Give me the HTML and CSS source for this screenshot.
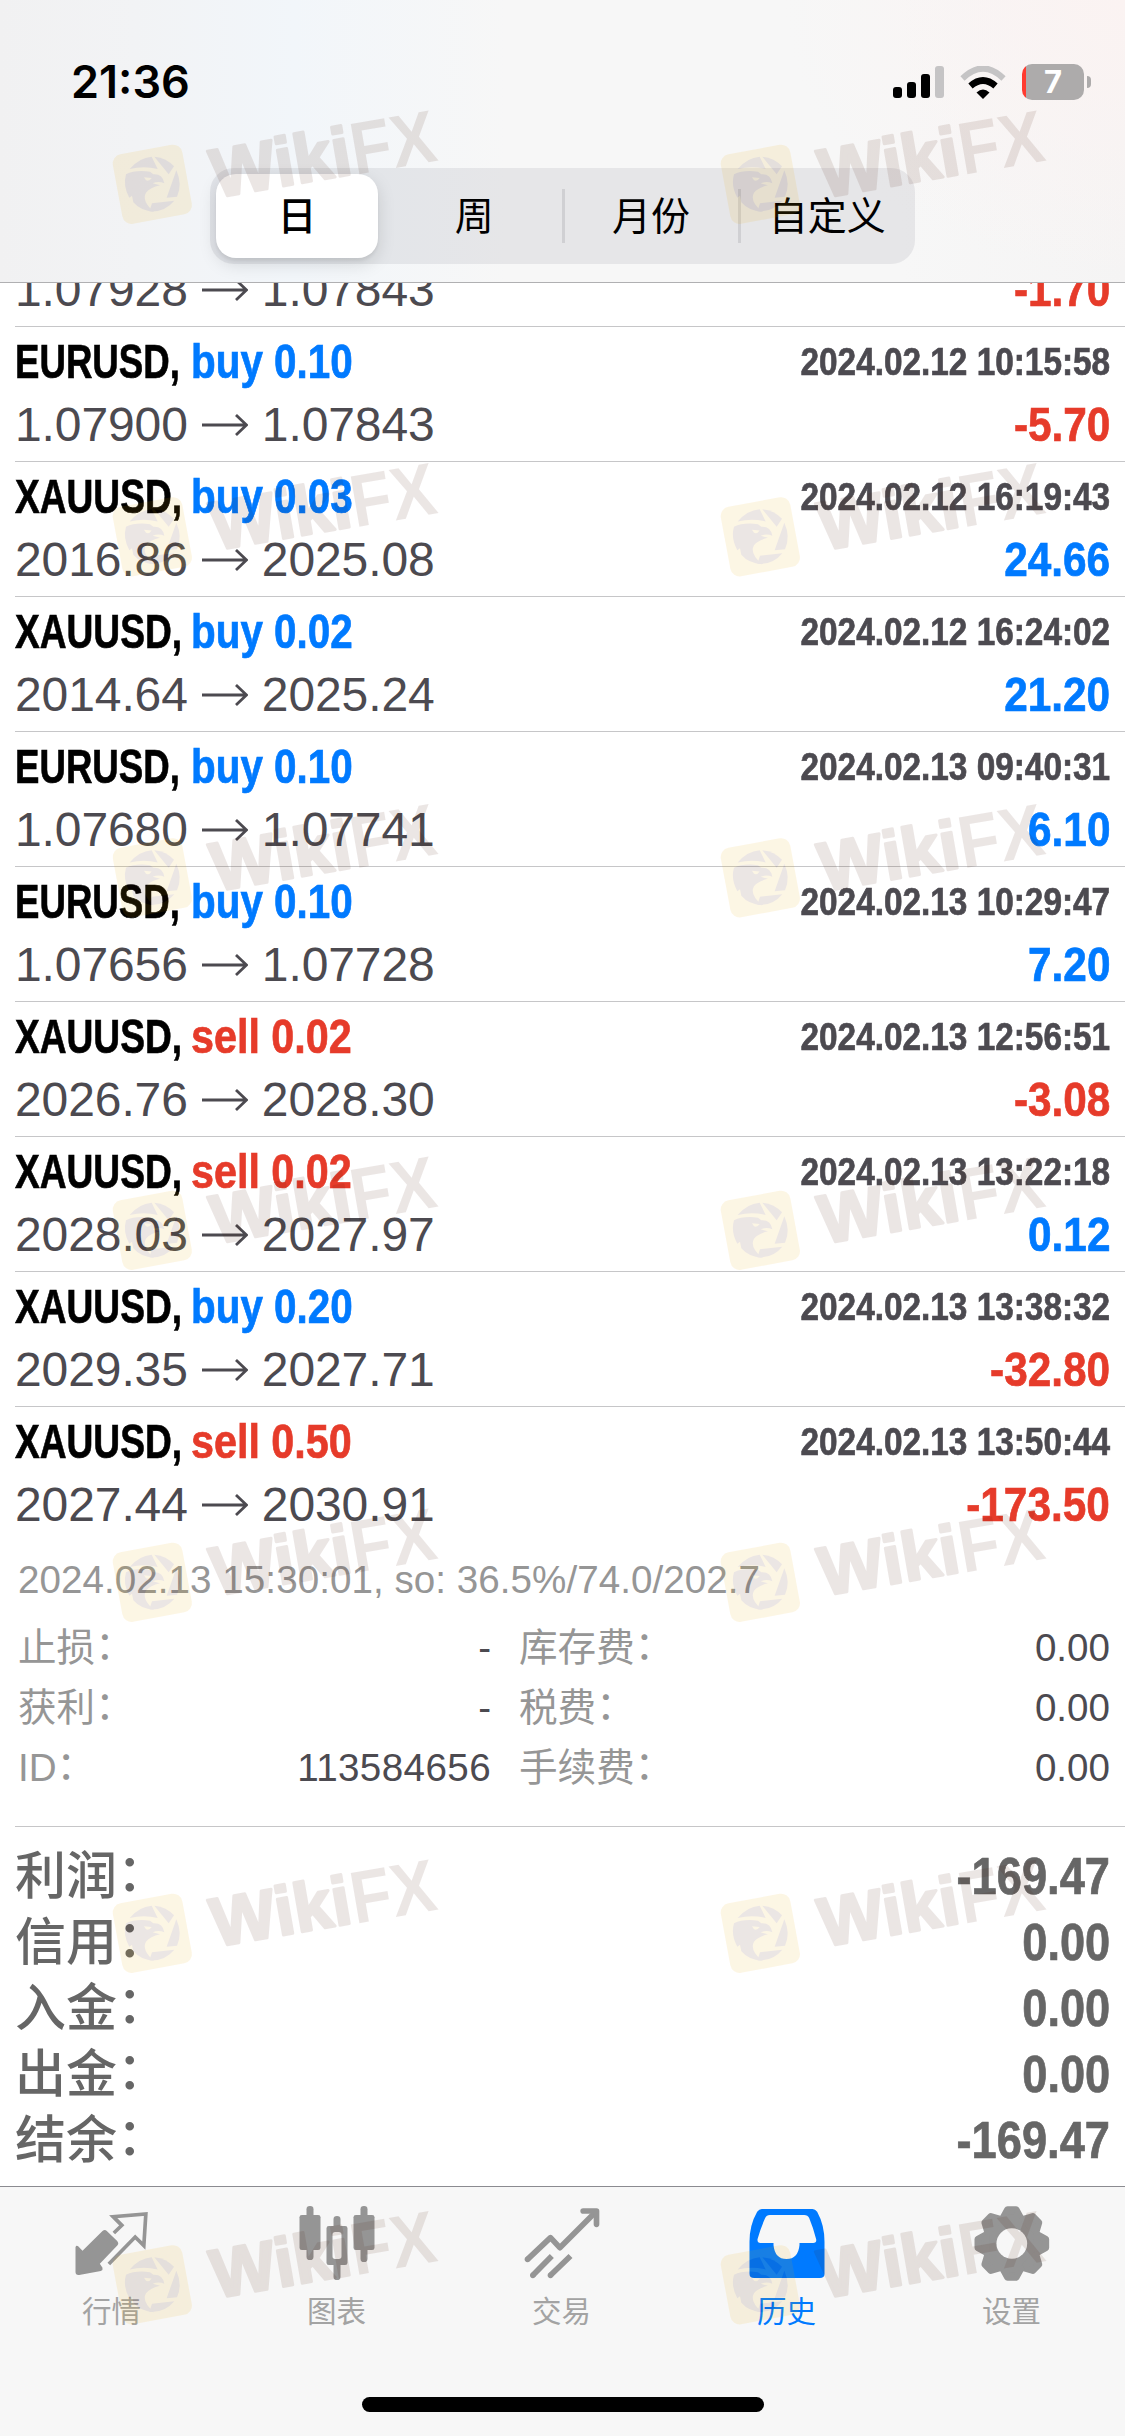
FILE: index.html
```html
<!DOCTYPE html>
<html lang="zh-CN">
<head>
<meta charset="utf-8">
<title>历史</title>
<link rel="stylesheet" href="styles.css">
</head>
<body>
<svg class="defs" width="0" height="0" aria-hidden="true">
  <symbol id="arrow" viewBox="0 0 46 24"><path d="M0 12H44M34 2L44.500 12L34 22" fill="none" stroke="#4c4a50" stroke-width="2.800"/></symbol>
  <symbol id="mark" viewBox="0 0 1050 390" overflow="visible">
    <rect x="51" y="144" width="212" height="212" rx="28" fill="#ebaa00" transform="rotate(-10.500 157 250)"/>
    <g fill="#461400">
      <path d="M89 204Q117 170 155 167L173 204Q132 194 89 204Z"/>
      <path d="M163 167Q200 171 222 196L206 220Z"/>
      <path d="M229 208Q248 250 231 287L200 290Z"/>
      <path d="M156 307L223 299Q194 334 148 331Z"/>
      <path d="M78 220Q106 206 150 212L160 220Q188 218 193 247Q176 239 158 247L180 253Q150 260 138 275Q124 300 162 332Q122 330 100 304L96 284L88 290Q68 255 78 220Z"/>
    </g>
    <path d="M132 229L155 231Q148 242 138 238Z" fill="#ebaa00"/>
    <g class="mark-text">
      <text class="mark-round" transform="translate(346 290) rotate(-9.800)" textLength="422" lengthAdjust="spacingAndGlyphs">Wiki</text>
      <text transform="translate(765 222) rotate(-9.800)" textLength="256" lengthAdjust="spacingAndGlyphs">FX</text>
    </g>
  </symbol>
</svg>

<header class="header">
  <div class="status">
    <span class="time">21:36</span>
    <div class="status-icons">
      <svg width="51" height="32" viewBox="0 0 51 32"><rect y="21" width="9" height="11" rx="3"/><rect x="14" y="16" width="9" height="16" rx="3"/><rect x="28" y="8" width="9" height="24" rx="3"/><rect x="42" width="9" height="32" rx="3" fill="#c5c4c5"/></svg>
      <svg width="46" height="33" viewBox="0 0 46 33"><path d="M2.500 12.500Q23-7.500 43.500 12.500" fill="none" stroke="#c5c4c5" stroke-width="6"/><path d="M10.500 20Q23 9 35.500 20" fill="none" stroke="#000" stroke-width="6.500"/><path d="M16.500 26.500Q23 20.500 29.500 26.500L23 33Z"/></svg>
      <div class="battery"><span>7</span></div>
    </div>
  </div>
  <nav class="segments">
    <span class="segment active">日</span><span class="segment">周</span><span class="segment ruled">月份</span><span class="segment ruled">自定义</span>
  </nav>
</header>

<main class="list">
  <div class="trade partial">
    <div class="line price"><span>1.07928</span><svg class="arrow"><use href="#arrow"/></svg><span>1.07843</span><b class="amount loss">-1.70</b></div>
  </div>
  <div class="trade">
    <div class="line title"><b class="symbol eur">EURUSD,</b><b class="side buy">buy 0.10</b><b class="date">2024.02.12 10:15:58</b></div>
    <div class="line price"><span>1.07900</span><svg class="arrow"><use href="#arrow"/></svg><span>1.07843</span><b class="amount loss">-5.70</b></div>
  </div>
  <div class="trade">
    <div class="line title"><b class="symbol">XAUUSD,</b><b class="side buy">buy 0.03</b><b class="date">2024.02.12 16:19:43</b></div>
    <div class="line price"><span>2016.86</span><svg class="arrow"><use href="#arrow"/></svg><span>2025.08</span><b class="amount gain">24.66</b></div>
  </div>
  <div class="trade">
    <div class="line title"><b class="symbol">XAUUSD,</b><b class="side buy">buy 0.02</b><b class="date">2024.02.12 16:24:02</b></div>
    <div class="line price"><span>2014.64</span><svg class="arrow"><use href="#arrow"/></svg><span>2025.24</span><b class="amount gain">21.20</b></div>
  </div>
  <div class="trade">
    <div class="line title"><b class="symbol eur">EURUSD,</b><b class="side buy">buy 0.10</b><b class="date">2024.02.13 09:40:31</b></div>
    <div class="line price"><span>1.07680</span><svg class="arrow"><use href="#arrow"/></svg><span>1.07741</span><b class="amount gain">6.10</b></div>
  </div>
  <div class="trade">
    <div class="line title"><b class="symbol eur">EURUSD,</b><b class="side buy">buy 0.10</b><b class="date">2024.02.13 10:29:47</b></div>
    <div class="line price"><span>1.07656</span><svg class="arrow"><use href="#arrow"/></svg><span>1.07728</span><b class="amount gain">7.20</b></div>
  </div>
  <div class="trade">
    <div class="line title"><b class="symbol">XAUUSD,</b><b class="side sell">sell 0.02</b><b class="date">2024.02.13 12:56:51</b></div>
    <div class="line price"><span>2026.76</span><svg class="arrow"><use href="#arrow"/></svg><span>2028.30</span><b class="amount loss">-3.08</b></div>
  </div>
  <div class="trade">
    <div class="line title"><b class="symbol">XAUUSD,</b><b class="side sell">sell 0.02</b><b class="date">2024.02.13 13:22:18</b></div>
    <div class="line price"><span>2028.03</span><svg class="arrow"><use href="#arrow"/></svg><span>2027.97</span><b class="amount gain">0.12</b></div>
  </div>
  <div class="trade">
    <div class="line title"><b class="symbol">XAUUSD,</b><b class="side buy">buy 0.20</b><b class="date">2024.02.13 13:38:32</b></div>
    <div class="line price"><span>2029.35</span><svg class="arrow"><use href="#arrow"/></svg><span>2027.71</span><b class="amount loss">-32.80</b></div>
  </div>
  <div class="trade">
    <div class="line title"><b class="symbol">XAUUSD,</b><b class="side sell">sell 0.50</b><b class="date">2024.02.13 13:50:44</b></div>
    <div class="line price"><span>2027.44</span><svg class="arrow"><use href="#arrow"/></svg><span>2030.91</span><b class="amount loss">-173.50</b></div>
  </div>
  <section class="details">
    <p class="comment">2024.02.13 15:30:01, so: 36.5%/74.0/202.7</p>
    <dl class="fields">
      <dt>止损<i>：</i></dt><dd>-</dd><dt>库存费<i>：</i></dt><dd>0.00</dd>
      <dt>获利<i>：</i></dt><dd>-</dd><dt>税费<i>：</i></dt><dd>0.00</dd>
      <dt>ID<i>：</i></dt><dd class="ticket">113584656</dd><dt>手续费<i>：</i></dt><dd>0.00</dd>
    </dl>
  </section>
  <section class="summary">
    <div class="total"><span>利润<i>：</i></span><b>-169.47</b></div>
    <div class="total"><span>信用<i>：</i></span><b>0.00</b></div>
    <div class="total"><span>入金<i>：</i></span><b>0.00</b></div>
    <div class="total"><span>出金<i>：</i></span><b>0.00</b></div>
    <div class="total"><span>结余<i>：</i></span><b>-169.47</b></div>
  </section>
</main>

<footer class="tabbar">
  <nav class="tabs">
    <div class="tab">
      <svg viewBox="13.500 15 288 252"><path fill="#959595" d="M45 157Q47 150 53 154L66 167L126 108Q133 102 139 108L170 138Q176 145 171 151L118 206L126 218Q128 225 121 228L56 240Q45 241 45 231Z"/><path d="M160 114L184 91L158 65L256 57L250 152L224 126L145 207" fill="none" stroke="#959595" stroke-width="11"/></svg>
      <span>行情</span>
    </div>
    <div class="tab">
      <svg viewBox="688.500 15 288 252" fill="#959595"><rect x="717" y="60" width="63" height="105" rx="7"/><rect x="738" y="33" width="21" height="162" rx="10"/><rect x="879" y="60" width="63" height="105" rx="7"/><rect x="900" y="33" width="21" height="168" rx="10"/><path fill-rule="evenodd" d="M819 93V73Q819 63 829.500 63Q840 63 840 73V93H854Q861 93 861 100V203Q861 210 854 210H840V245Q840 255 829.500 255Q819 255 819 245V210H805Q798 210 798 203V100Q798 93 805 93ZM824 111Q816 111 816 119V184Q816 192 824 192H835Q843 192 843 184V119Q843 111 835 111Z"/></svg>
      <span>图表</span>
    </div>
    <div class="tab">
      <svg viewBox="1363.500 15 288 252" fill="none" stroke="#959595" stroke-width="17"><path d="M1401 193L1470 128L1498 158L1606 50" stroke-linejoin="round"/><path d="M1568 48H1608V88" stroke-linecap="round" stroke-linejoin="round"/><path d="M1417 241L1474 183M1470 241L1530 183"/><g fill="#959595" stroke="none"><circle cx="1401" cy="193" r="8.500"/><circle cx="1417" cy="241" r="8.500"/><circle cx="1470" cy="241" r="8.500"/></g></svg>
      <span>交易</span>
    </div>
    <div class="tab selected">
      <svg viewBox="2038.500 15 288 252" fill="#007aff"><path fill-rule="evenodd" d="M2104 42H2256Q2264 42 2270 50Q2292 90 2292 140V236Q2292 249 2278 249H2081Q2067 249 2067 236V140Q2067 90 2090 50Q2096 42 2104 42ZM2128 60Q2118 60 2114 69Q2100 100 2091 133Q2090 144 2100 144H2139V150Q2143 192 2178 192Q2213 192 2217 150V144H2258Q2269 144 2267 133Q2259 100 2246 69Q2242 60 2231 60Z"/></svg>
      <span>历史</span>
    </div>
    <div class="tab">
      <svg viewBox="2713.500 15 288 252">
        <mask id="hole"><rect x="2700" y="0" width="310" height="300" fill="#fff"/><circle cx="2854" cy="145.500" r="46" fill="#000"/></mask>
        <g mask="url(#hole)" fill="#959595"><circle cx="2854" cy="145.500" r="88"/>
          <g stroke="#959595" stroke-width="20" stroke-linejoin="round" transform="translate(2854 145.500)">
            <path id="tooth" d="M-13-102H13L27-76H-27Z"/><use href="#tooth" transform="rotate(45)"/><use href="#tooth" transform="rotate(90)"/><use href="#tooth" transform="rotate(135)"/><use href="#tooth" transform="rotate(180)"/><use href="#tooth" transform="rotate(225)"/><use href="#tooth" transform="rotate(270)"/><use href="#tooth" transform="rotate(315)"/>
          </g></g>
      </svg>
      <span>设置</span>
    </div>
  </nav>
  <div class="home"></div>
</footer>

<svg class="watermarks" width="1125" height="2436" viewBox="0 0 1125 2436" aria-hidden="true">
  <g id="column">
    <use href="#mark" x="100" y="101" width="350" height="130"/>
    <use href="#mark" x="100" y="453.500" width="350" height="130"/>
    <use href="#mark" x="100" y="794.500" width="350" height="130"/>
    <use href="#mark" x="100" y="1147" width="350" height="130"/>
    <use href="#mark" x="100" y="1499" width="350" height="130"/>
    <use href="#mark" x="100" y="1850" width="350" height="130"/>
    <use href="#mark" x="100" y="2201.500" width="350" height="130"/>
  </g>
  <use href="#column" x="608"/>
</svg>
</body>
</html>
```
FILE: styles.css
```css
* { box-sizing: border-box; }

body {
  position: relative;
  display: flex;
  flex-direction: column;
  width: 1125px;
  height: 2436px;
  margin: 0;
  overflow: hidden;
  background: #fff;
  color: #4c4a50;
  font-family: "Liberation Sans", "Noto Sans CJK SC", sans-serif;
}

b { font-weight: 700; -webkit-text-stroke: .7px currentColor; }
.defs { position: absolute; }

/* Full-width colons sit at the middle of the line */
i {
  display: inline-block;
  font-style: normal;
  transform: translateY(-.06em);
}

/* Status bar and period switch */
.header {
  flex: none;
  height: 283px;
  border-bottom: 1px solid #b0b0b2;
  background:
    radial-gradient(ellipse 340px 280px at 100% 0, #fbf3f2, transparent),
    linear-gradient(90deg, #f1f1f2 0, #f2f3f5 12%, #f2f6fa 26%, #f7f7f7 45%, #f7f7f7 80%, #f5f4f4 100%);
}

.status {
  display: flex;
  align-items: flex-start;
  justify-content: space-between;
  height: 168px;
  padding: 64px 34px 0 71px;
}

.time {
  margin-top: -8px;
  color: #000;
  font: 600 45px/52px Inter, sans-serif;
}

.status-icons { display: flex; align-items: center; gap: 16px; }

.battery {
  position: relative;
  width: 62px;
  height: 36px;
  margin-right: 7px;
  border-radius: 10px;
  background: linear-gradient(90deg, #ff3b30 4px, #adabab 4px);
  color: #fff;
  font: 700 31px/36px Inter, sans-serif;
  text-align: center;
}

.battery::after {
  position: absolute;
  top: 12px;
  right: -7px;
  width: 4px;
  height: 12px;
  border-radius: 0 6px 6px 0;
  background: #adabab;
  content: "";
}

.segments {
  display: grid;
  grid-template-columns: repeat(4, 1fr);
  width: 705px;
  height: 96px;
  margin-left: 210px;
  border-radius: 24px;
  background: rgba(118, 118, 128, .13);
  color: #000;
  font-size: 39px;
  line-height: 98px;
  text-align: center;
}

.segment.active {
  height: 84px;
  margin: 6px 8px 0 6px;
  border-radius: 20px;
  background: #fff;
  box-shadow: 0 6px 18px rgba(0, 0, 0, .13), 0 3px 3px rgba(0, 0, 0, .05);
  font-weight: 500;
  line-height: 86px;
}

.ruled {
  margin-left: -1px;
  padding-left: 2px;
  background: linear-gradient(#d0d0d3, #d0d0d3) 0 21px / 3px 54px no-repeat;
}

/* Closed positions */
.list { flex: none; height: 1903px; overflow: hidden; }

.trade {
  height: 135px;
  margin-left: 15px;
  padding: 1px 15px 0 0;
  border-top: 1px solid #c6c6c8;
}

/* Row scrolled under the header: only its lower part is left */
.trade.partial { display: flow-root; height: 43px; padding-top: 0; border: 0; }
.partial .line { margin-top: -24px; }

.line { display: flex; align-items: center; font-size: 48px; white-space: nowrap; }
.title { height: 66px; line-height: 67px; }
.price { height: 61px; line-height: 61px; }
.price span { letter-spacing: -.1px; }

.symbol {
  width: 176px;
  color: #000;
  transform: scaleX(.773);
  transform-origin: 0 50%;
}
.symbol.eur { transform: scaleX(.763); }
.side { transform: scaleX(.842); transform-origin: 0 50%; }
.side.sell { transform: scaleX(.86); }
.buy, .gain { color: #007aff; }
.sell, .loss { color: #e63b2a; }

.date {
  margin-left: auto;
  font-size: 39px;
  transform: scaleX(.855);
  transform-origin: 100% 50%;
}

.amount {
  margin-left: auto;
  transform: scaleX(.882);
  transform-origin: 100% 50%;
}

.arrow { width: 46px; height: 24px; margin: 0 14px; }

/* Expanded position */
.details { height: 285px; padding: 7px 15px 0 18px; font-size: 38.6px; white-space: nowrap; }
.comment { margin: 0 0 6px; color: #969696; letter-spacing: .05px; line-height: 64px; }

.fields {
  display: grid;
  grid-template-columns: 150px 323px 178px 1fr;
  margin: 0;
  line-height: 60px;
}
.fields dt { color: #969696; }
.fields dt:nth-of-type(even) { padding-left: 28px; }
.fields dd { margin: 0; text-align: right; }
.fields .ticket { letter-spacing: .4px; }

/* Account totals */
.summary {
  height: 360px;
  margin-left: 15px;
  padding: 17px 15px 0 0;
  border-top: 1px solid #c6c6c8;
  color: #666;
  font-size: 51px;
  line-height: 66px;
}

.total { display: flex; justify-content: space-between; height: 66px; }
.total span { font-weight: 500; }
.total b { transform: scaleX(.887); transform-origin: 100% 50%; }

/* Tab bar */
.tabbar {
  flex: none;
  height: 250px;
  border-top: 1px solid #8b8b90;
  background: #f7f7f7;
}

.tabs {
  display: grid;
  grid-template-columns: repeat(5, 1fr);
  height: 210px;
  margin: 0 1px 0 -1px;
}

.tab {
  display: flex;
  flex-direction: column;
  align-items: center;
  padding-top: 13px;
  color: #a3a3a3;
  font-size: 29.5px;
  line-height: 44px;
}
.tab svg { width: 96px; height: 84px; margin-bottom: 6px; transform: translateX(1px); }
.tab.selected { color: #007aff; }

.home { width: 402px; height: 15px; margin: 0 auto; border-radius: 8px; background: #000; }

/* Repeating brand mark over the whole screen */
.watermarks { position: absolute; inset: 0; opacity: .1; pointer-events: none; }
.mark-text { fill: #461400; font: 700 222px "Liberation Sans", sans-serif; }
.mark-round { stroke: #461400; stroke-width: 9px; stroke-linejoin: round; font-size: 206px; }
```
